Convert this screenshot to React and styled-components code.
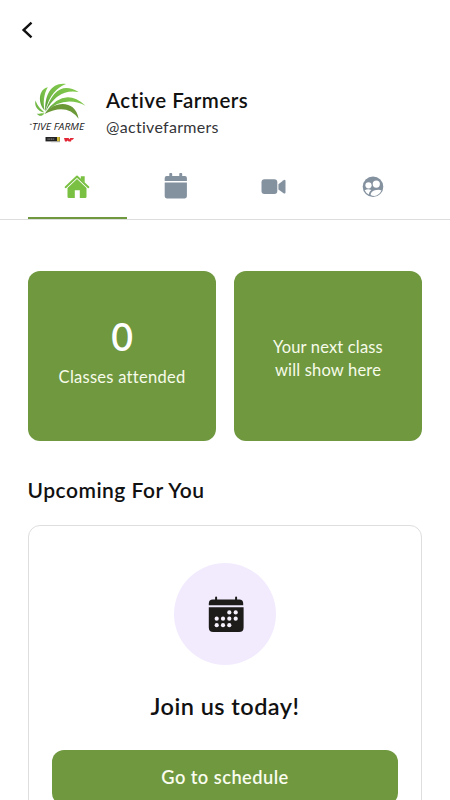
import React from "react";
import styled, { createGlobalStyle } from "styled-components";

const GlobalStyle = createGlobalStyle`
  *, *::before, *::after { box-sizing: border-box; }
  body { margin: 0; background: #fff; overflow: hidden; }
`;

const green = "#6f983f";

const Screen = styled.main`
  width: 450px;
  height: 800px;
  overflow: hidden;
  display: flex;
  flex-direction: column;
  background: #fff;
  color: #111;
  font-family: Lato, "Open Sans", sans-serif;
`;

const TopBar = styled.header`
  height: 76px;
  flex: none;
  padding: 20px 0 0 20px;
`;

const BackButton = styled.button`
  display: block;
  padding: 0;
  border: 0;
  background: none;
  svg { display: block; }
`;

const Profile = styled.section`
  height: 75px;
  flex: none;
  display: flex;
  padding-left: 20px;
  gap: 11px;
`;

const LogoArt = styled.svg`
  display: block;
  flex: none;
`;

const Names = styled.div`
  padding-top: 12px;
`;

const Text = styled.div`
  font-size: ${(p) => p.$size}px;
  line-height: ${(p) => p.$line}px;
  font-weight: ${(p) => p.$weight || 400};
  letter-spacing: ${(p) => p.$track || 0}px;
  color: ${(p) => p.$color || "inherit"};
  white-space: nowrap;
`;

const Tabs = styled.nav`
  height: 69px;
  flex: none;
  display: grid;
  grid-template-columns: repeat(4, 98.6px);
  padding: 0 28px;
  border-bottom: 1px solid #dcdddd;
`;

const Tab = styled.button`
  padding: 19px 0 4px;
  border: 0;
  border-bottom: 2px solid ${(p) => (p.$active ? green : "transparent")};
  background: none;
  color: ${(p) => (p.$active ? "#7ac143" : "#84919f")};
  display: flex;
  justify-content: center;
  svg { display: block; }
`;

const Stats = styled.section`
  flex: none;
  display: grid;
  grid-template-columns: 188px 188px;
  gap: 18px;
  padding: 51px 28px 0;
`;

const StatCard = styled.article`
  height: 170px;
  padding-bottom: ${(p) => p.$lift || 0}px;
  padding-top: ${(p) => p.$drop || 0}px;
  border-radius: 12px;
  background: ${green};
  color: #f7fbea;
  display: flex;
  flex-direction: column;
  align-items: center;
  justify-content: center;
  text-align: center;
`;

const Count = styled.strong`
  font-size: 37.5px;
  line-height: 44px;
  font-weight: 600;
  color: #fff;
  margin-bottom: 7px;
`;

const Heading = styled.h2`
  flex: none;
  margin: 35px 0 0 27.5px;
  font-size: 21px;
  line-height: 28px;
  font-weight: 600;
  letter-spacing: 0.5px;
`;

const JoinCard = styled.section`
  flex: none;
  margin: 21px 28px 0;
  height: 310px;
  border: 1px solid #dedede;
  border-radius: 12px;
  padding: 37px 23px 0;
  display: flex;
  flex-direction: column;
  align-items: center;
`;

const IconDisc = styled.div`
  width: 102px;
  height: 102px;
  margin-bottom: 26px;
  border-radius: 50%;
  background: #f2ebfe;
  display: flex;
  align-items: center;
  justify-content: center;
`;

const ScheduleButton = styled.button`
  align-self: stretch;
  height: 55px;
  margin-top: 29px;
  padding: 0 0 2px;
  border: 0;
  border-radius: 12px;
  background: ${green};
  color: #f9fcee;
  font: inherit;
  display: flex;
  align-items: center;
  justify-content: center;
`;

const BackIcon = () => (
  <svg width="16" height="20" viewBox="20 20 16 20">
    <path d="M31.5 22.7 L23.6 30 L31.5 37.3" fill="none" stroke="#111" strokeWidth="2.4" />
  </svg>
);

const Logo = () => (
  <LogoArt width="75" height="75" viewBox="20 76 75 75">
    <defs>
      <linearGradient id="leaf" x1="0" y1="1" x2="1" y2="0">
        <stop offset="0" stopColor="#4f8f35" />
        <stop offset=".35" stopColor="#72b846" />
        <stop offset="1" stopColor="#82cb4c" />
      </linearGradient>
    </defs>
    <g fill="url(#leaf)">
      <path d="M45.3 111.5C44.5 94 52 82 66 84C57 87.5 49 95 45.3 111.5Z" />
      <path d="M45.5 111.5Q56 78.5 78.7 92Q58 88 45.5 111.5Z" />
      <path d="M45.8 112Q64.3 86 85.6 105.7Q64 95 45.8 112Z" />
      <path d="M44.7 110.5C37.5 103 38.5 89 47.8 87.2C43.5 94 43 104 44.7 110.5Z" />
      <path d="M44.5 112.5C37.5 111.5 34 105.5 35.5 100.5C38 107 41 109 44.5 112.5Z" />
      <path d="M44.5 113.5C41.5 117 39 116 36.7 113.7C40 114 42 112.5 44.5 113.5Z" />
    </g>
    <path d="M44.5 114C54 100 76 100 78.6 118.7Q66.5 102.5 44.5 114Z" fill="#6b9937" />
    <path d="M29.8 124.3l2 .1" stroke="#444" strokeWidth=".8" />
    <text x="32" y="130" fontFamily="Open Sans" fontSize="9.2" fontWeight="500" fontStyle="italic" fill="#222" textLength="52.3" lengthAdjust="spacingAndGlyphs">TIVE FARME</text>
    <path d="M45.5 137h14.5v4.4H45.5Z" fill="#222" />
    <path d="M57 137h2.8v4.2H57Z" fill="#d3bd38" />
    <path d="M47.5 139.1h7" stroke="#aaa" strokeWidth=".9" strokeDasharray="1.2 .5" />
    <path d="M51 142.5h9" stroke="#ddd" strokeWidth=".6" />
    <path d="M64 138h4.7l.5 1.5 1-1.5h3.8l-1.2 1.8h-1.2l-.6 1.7h-2.4l-1-1-.9 1H65Z" fill="#e32636" />
  </LogoArt>
);

const HomeIcon = () => (
  <svg width="26" height="30" viewBox="64 170 26 30">
    <path d="M65.6 187.2 L77 176.5 L88.4 187.2" fill="none" stroke="currentColor" strokeWidth="1.9" strokeLinecap="round" strokeLinejoin="round" />
    <path d="M80.8 177.6V176.3h3.9v6.5l-3.9-3.5Z" fill="currentColor" />
    <path d="M67.5 187.9 77 179.1l9.5 8.8v8.8q0 1.4-1.3 1.4h-5.4v-7.9h-5v7.9h-6q-1.3 0-1.3-1.4Z" fill="currentColor" />
  </svg>
);

const CalendarIcon = () => (
  <svg width="26" height="30" viewBox="163 170 26 30">
    <path d="M164.7 181v-3q0-2 2-2h2.6v-2.2q0-.8.8-.8h1.3q.8 0 .8.8v2.2h7.1v-2.2q0-.8.8-.8h1.3q.8 0 .8.8v2.2h2.7q2 0 2 2v3ZM164.7 182.6h22.2v13.7q0 2.1-2.1 2.1h-18q-2.1 0-2.1-2.1Z" fill="currentColor" />
  </svg>
);

const VideoIcon = () => (
  <svg width="26" height="30" viewBox="261 170 26 30">
    <rect x="261.5" y="179.3" width="15.8" height="14.8" rx="3" fill="currentColor" />
    <path d="M278.4 184.3l5.2-4.1q1.7-1 1.9.8v11.6q-.2 1.6-1.9.6l-5.2-3.8Z" fill="currentColor" />
  </svg>
);

const PeopleIcon = () => (
  <svg width="24" height="30" viewBox="361.3 170 24 30">
    <circle cx="373.3" cy="186.8" r="10.3" fill="currentColor" />
    <g fill="#fff">
      <circle cx="376.6" cy="184.1" r="3.6" />
      <circle cx="368.8" cy="185.3" r="3.1" />
      <path d="M365 190.2q3-1.8 6.6-.3-2.3 1.7-2.5 4.7-2.7-1.3-4.1-4.4Z" />
      <path d="M370.9 195q.2-3.7 4.2-4.7 4.2-.9 6.7.1-2.4 4.9-7.2 5.5-2.1 0-3.7-.9Z" />
    </g>
  </svg>
);

const dots = [[229.3, 612.2], [235.7, 612.2], [216.7, 618.5], [223, 618.5], [229.3, 618.5], [235.7, 618.5], [216.7, 625], [223, 625], [229.3, 625]];

const ScheduleIcon = () => (
  <svg width="38" height="38" viewBox="206 594.8 38 38">
    <path d="M208.8 605v-1.8q0-4 4-4h2.3v-2q0-1 1-1t1 1v2h18v-2q0-1 1-1t1 1v2h2.1q4 0 4 4v1.8ZM208.8 607.1h34.8v20.3q0 4.5-4.5 4.5h-25.8q-4.5 0-4.5-4.5Z" fill="#1d1c1b" />
    {dots.map(([x, y]) => <circle key={`${x}-${y}`} cx={x} cy={y} r="2.1" fill="#f5f0fc" />)}
  </svg>
);

export default function App() {
  return (
    <Screen>
      <GlobalStyle />
      <TopBar><BackButton aria-label="Back"><BackIcon /></BackButton></TopBar>
      <Profile>
        <Logo />
        <Names>
          <Text $size={20.5} $line={25} $weight={600} $track={0.52}>Active Farmers</Text>
          <Text $size={16} $line={28} $color="#333438" $track={0.3}>@activefarmers</Text>
        </Names>
      </Profile>
      <Tabs>
        <Tab $active aria-label="Home"><HomeIcon /></Tab>
        <Tab aria-label="Calendar"><CalendarIcon /></Tab>
        <Tab aria-label="Videos"><VideoIcon /></Tab>
        <Tab aria-label="Community"><PeopleIcon /></Tab>
      </Tabs>
      <Stats>
        <StatCard $lift={9}>
          <Count>0</Count>
          <Text $size={16.5} $line={23} $track={0.27}>Classes attended</Text>
        </StatCard>
        <StatCard $drop={6}>
          <Text $size={16.5} $line={23} $track={0.17}>Your next class<br />will show here</Text>
        </StatCard>
      </Stats>
      <Heading>Upcoming For You</Heading>
      <JoinCard>
        <IconDisc><ScheduleIcon /></IconDisc>
        <Text $size={23.5} $line={30} $weight={600} $track={0.45}>Join us today!</Text>
        <ScheduleButton>
          <Text $size={18.3} $line={24} $weight={600} $track={0.45}>Go to schedule</Text>
        </ScheduleButton>
      </JoinCard>
    </Screen>
  );
}
